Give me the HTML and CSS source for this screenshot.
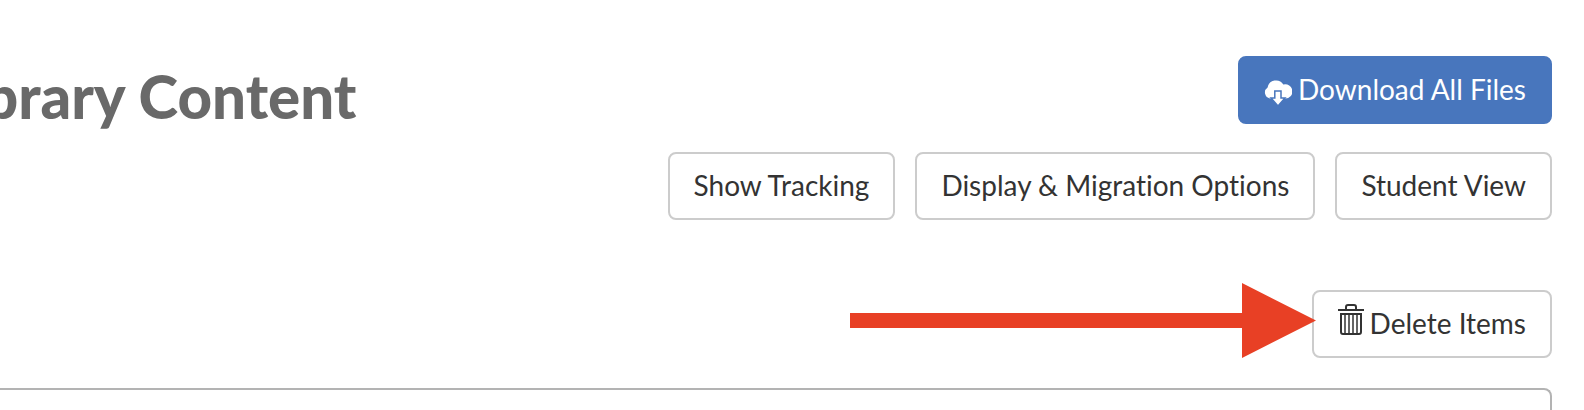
FILE: index.html
```
<!DOCTYPE html>
<html lang="en">
<head>
  <meta charset="UTF-8">
  <title>Library Content</title>
  <link rel="stylesheet" href="styles.css">
</head>
<body>

  <header class="page-header">
    <h1 class="page-title">brary Content</h1>
    <button type="button" class="btn btn-primary">
      <svg class="icon-cloud" viewBox="0 0 28 26" width="28" height="26" aria-hidden="true">
        <path fill="#fff" d="M6 18.500A6 6 0 0 1 3.600 7.600A8.500 8.500 0 0 1 19.300 4.600A7.100 7.100 0 1 1 21 18.500Z"/>
        <path fill="#fff" stroke="#4876bd" stroke-width="1.500" d="M10.800 11H17V18H21L14 26L7 18H10.800Z"/>
      </svg>
      <span>Download All Files</span>
    </button>
  </header>

  <div class="toolbar">
    <button type="button" class="btn">Show Tracking</button>
    <button type="button" class="btn">Display &amp; Migration Options</button>
    <button type="button" class="btn">Student View</button>
  </div>

  <div class="list-actions">
    <div class="delete-wrap">
      <button type="button" class="btn">
        <svg class="icon-trash" viewBox="0 0 26 31" width="26" height="31" aria-hidden="true">
          <path fill="none" stroke="#333" stroke-width="2" d="M8 5V3Q8 1 10 1H16Q18 1 18 3V5"/>
          <path fill="#333" d="M0 5H26V7H0Z"/>
          <path fill="none" stroke="#333" stroke-width="2" d="M3 10H23V28Q23 30 21 30H5Q3 30 3 28Z"/>
          <path fill="none" stroke="#333" stroke-width="1.500" d="M7 10V30M11 10V30M15 10V30M19 10V30"/>
        </svg>
        <span>Delete Items</span>
      </button>
      <svg class="arrow" viewBox="0 0 466 75" width="466" height="75" aria-hidden="true">
        <path fill="#e84025" d="M0 30H392V0L466 37.500L392 75V45H0Z"/>
      </svg>
    </div>
  </div>

  <div class="content-panel"></div>

</body>
</html>
```
FILE: styles.css
```
body {
  font-family: Lato, 'Open Sans', sans-serif;
  font-variant-ligatures: none;
  background: #fff;
  color: #333;
  margin: 0;
  padding: 56px 32px 0 0;
}
.page-header {
  display: flex;
  justify-content: space-between;
  align-items: flex-start;
  margin-bottom: 28px;
}
.page-title {
  margin: 10px 0 -2px -16px;
  font-size: 60px;
  line-height: 60px;
  font-weight: 900;
  color: #696969;
}
.btn {
  display: flex;
  align-items: center;
  gap: 6px;
  box-sizing: border-box;
  height: 68px;
  padding: 0 24px 2px;
  border: 2px solid #ccc;
  border-radius: 8px;
  background: #fff;
  color: #333;
  font-family: inherit;
  font-variant-ligatures: inherit;
  font-size: 28px;
  line-height: 32px;
  white-space: nowrap;
  cursor: pointer;
}
.btn-primary {
  border-color: #4876bd;
  background: #4876bd;
  color: #fff;
}
.icon-cloud {
  margin-top: 8px;
}
.icon-trash {
  margin-bottom: 8px;
}
.toolbar {
  display: flex;
  justify-content: flex-end;
  gap: 20px;
  margin-bottom: 70px;
}
.list-actions {
  display: flex;
  justify-content: flex-end;
  margin-bottom: 30px;
}
.delete-wrap {
  position: relative;
}
/* pointer runs over the left edge of the button */
.arrow {
  position: absolute;
  right: calc(100% - 4px);
  top: -7px;
}
.content-panel {
  height: 20px;
  border: 2px solid #b3b3b3;
  border-width: 2px 2px 0 0;
  border-radius: 0 8px 0 0;
}
```
